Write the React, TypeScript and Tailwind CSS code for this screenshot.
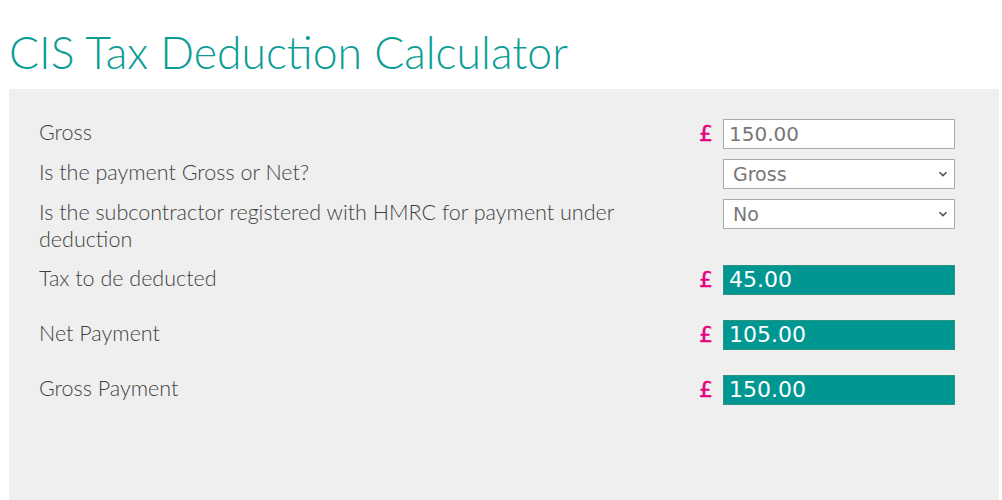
export default function App() {
  const label =
    "w-[620px] text-[21.5px] leading-[27px] font-light text-[#3f3f3f] [font-family:Lato,sans-serif]";
  const pound =
    "w-6 text-[22px] leading-[30px] font-normal [-webkit-text-stroke:0.4px_#e6007e] text-[#e6007e] [font-family:'DejaVu_Sans',sans-serif]";

  return (
    <div className="min-h-[500px] bg-white [font-family:Lato,sans-serif]">
      <h1 className="pl-[9px] pt-[24px] pb-[10px] text-[44.5px] font-light leading-[55px] text-[#0b9d95]">
        CIS Tax Deduction Calculator
      </h1>
      <div className="ml-[9px] mr-[3px] h-[411px] bg-[#efefef] pl-[30px] pr-[44px] pt-[30px]">
        <div className="flex h-[30px] items-start">
          <div className={label}>Gross</div>
          <div className="ml-auto flex items-start">
            <span className={pound}>£</span>
            <input
              defaultValue="150.00"
              className="h-[30px] w-[232px] border border-[#a9a9a9] bg-white px-[5px] text-[20px] text-[#777] outline-none [font-family:'DejaVu_Sans',sans-serif]"
            />
          </div>
        </div>

        <div className="mt-[10px] flex items-start">
          <div className={label}>Is the payment Gross or Net?</div>
          <div className="ml-auto flex items-start">
            <span className="w-6" />
            <Select value="Gross" />
          </div>
        </div>

        <div className="mt-[10px] flex items-start">
          <div className={label}>Is the subcontractor registered with HMRC for payment under deduction</div>
          <div className="ml-auto flex items-start">
            <span className="w-6" />
            <Select value="No" />
          </div>
        </div>

        <Result className="mt-[12px]" name="Tax to de deducted" value="45.00" label={label} pound={pound} />
        <Result className="mt-[25px]" name="Net Payment" value="105.00" label={label} pound={pound} />
        <Result className="mt-[25px]" name="Gross Payment" value="150.00" label={label} pound={pound} />
      </div>
    </div>
  );
}

function Select({ value }: { value: string }) {
  return (
    <div className="flex h-[30px] w-[232px] items-center justify-between border border-[#a9a9a9] bg-white pl-[9px] pr-[6px] text-[19px] text-[#777] [font-family:'DejaVu_Sans',sans-serif]">
      <span>{value}</span>
      <svg width="10" height="6" viewBox="0 0 10 6" fill="none" aria-hidden>
        <path d="M1.5 1.2 L5 4.6 L8.5 1.2" stroke="#555" strokeWidth="1.6" />
      </svg>
    </div>
  );
}

function Result({
  className,
  name,
  value,
  label,
  pound,
}: {
  className: string;
  name: string;
  value: string;
  label: string;
  pound: string;
}) {
  return (
    <div className={`flex items-start ${className}`}>
      <div className={label}>{name}</div>
      <div className="ml-auto flex items-start">
        <span className={pound}>£</span>
        <div className="h-[30px] w-[232px] border border-[#2b9480] bg-[#009792] px-[5px] text-[22px] leading-[28px] font-normal text-white [font-family:'DejaVu_Sans',sans-serif]">
          {value}
        </div>
      </div>
    </div>
  );
}
